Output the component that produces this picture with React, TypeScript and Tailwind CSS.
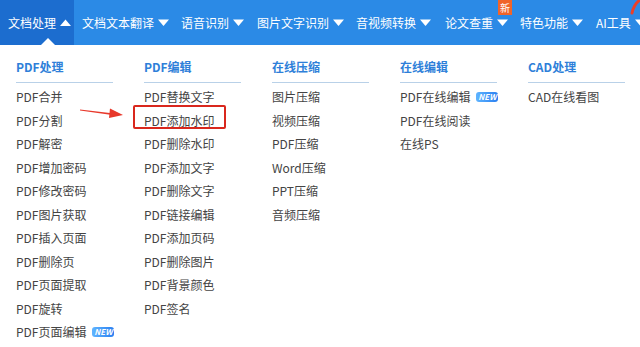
import React from "react";

const font = { fontFamily: '"Noto Sans CJK SC", "Noto Sans", sans-serif' };

const navItems = [
  { label: "文档处理", w: "w-[74px]", active: true },
  { label: "文档文本翻译", w: "w-[99px]" },
  { label: "语音识别", w: "w-[76px]" },
  { label: "图片文字识别", w: "w-[99px]" },
  { label: "音视频转换", w: "w-[89px]" },
  { label: "论文查重", w: "w-[75px]", badge: true },
  { label: "特色功能", w: "w-[76px]" },
  { label: "AI工具", w: "w-[60px]" },
];

type Item = { text: string; isNew?: boolean; boxed?: boolean };

const columns: { title: string; items: Item[] }[] = [
  {
    title: "PDF处理",
    items: [
      { text: "PDF合并" },
      { text: "PDF分割" },
      { text: "PDF解密" },
      { text: "PDF增加密码" },
      { text: "PDF修改密码" },
      { text: "PDF图片获取" },
      { text: "PDF插入页面" },
      { text: "PDF删除页" },
      { text: "PDF页面提取" },
      { text: "PDF旋转" },
      { text: "PDF页面编辑", isNew: true },
    ],
  },
  {
    title: "PDF编辑",
    items: [
      { text: "PDF替换文字" },
      { text: "PDF添加水印", boxed: true },
      { text: "PDF删除水印" },
      { text: "PDF添加文字" },
      { text: "PDF删除文字" },
      { text: "PDF链接编辑" },
      { text: "PDF添加页码" },
      { text: "PDF删除图片" },
      { text: "PDF背景颜色" },
      { text: "PDF签名" },
    ],
  },
  {
    title: "在线压缩",
    items: [
      { text: "图片压缩" },
      { text: "视频压缩" },
      { text: "PDF压缩" },
      { text: "Word压缩" },
      { text: "PPT压缩" },
      { text: "音频压缩" },
    ],
  },
  {
    title: "在线编辑",
    items: [
      { text: "PDF在线编辑", isNew: true },
      { text: "PDF在线阅读" },
      { text: "在线PS" },
    ],
  },
  {
    title: "CAD处理",
    items: [{ text: "CAD在线看图" }],
  },
];

function Caret({ up }: { up?: boolean }) {
  return (
    <svg width="11" height="7" viewBox="0 0 11 7" className="ml-[4px]">
      {up ? (
        <path d="M0 7 L5.5 0.5 L11 7 Z" fill="#fff" />
      ) : (
        <path d="M0 0.5 L11 0.5 L5.5 7 Z" fill="#fff" />
      )}
    </svg>
  );
}

function NewTag() {
  return (
    <span className="ml-[6px] inline-flex h-[10px] w-[22px] items-center justify-center rounded-[3px] bg-gradient-to-r from-[#5fb4ff] to-[#2a7ff0] text-[8px] font-bold italic leading-none text-white">
      NEW
    </span>
  );
}

export default function App() {
  return (
    <div className="w-[640px] h-[347px] overflow-hidden bg-white" style={font}>
      <nav className="relative flex h-[45px] bg-[#2b8ae6] text-[12px] text-white">
        {navItems.map((n) => (
          <div
            key={n.label}
            className={`relative flex shrink-0 items-center pl-[8px] ${n.w} ${n.active ? "bg-[#1c6dcf]" : ""}`}
          >
            <span>{n.label}</span>
            <Caret up={n.active} />
            {n.active && (
              <svg width="14" height="7" viewBox="0 0 14 7" className="absolute bottom-0 left-[41px]">
                <path d="M0 7 L7 0 L14 7 Z" fill="#fff" />
              </svg>
            )}
            {n.badge && (
              <span className="absolute left-[61px] top-0 flex h-[15px] w-[14px] items-center justify-center bg-[#f0642a] text-[10px] leading-none">
                新
              </span>
            )}
          </div>
        ))}
        <svg width="10" height="16" viewBox="0 0 10 16" className="absolute right-0 top-0">
          <path d="M10 0 Q4 4 2 13" stroke="#e8402a" strokeWidth="3" fill="none" strokeLinecap="round" />
        </svg>
      </nav>

      <div className="relative flex pl-[16px] pt-[12px]">
        {columns.map((c) => (
          <div key={c.title} className="w-[128px] shrink-0">
            <div className="w-[97px] border-b border-[#b9d1e8] pb-[5px] text-[12px] font-bold leading-[20px] text-[#2e7fd9]">
              {c.title}
            </div>
            <ul className="mt-[2px]">
              {c.items.map((it) => (
                <li
                  key={it.text}
                  className="relative flex items-center text-[12px] leading-[23.5px] text-[#444]"
                >
                  {it.text}
                  {it.isNew && <NewTag />}
                  {it.boxed && (
                    <span className="absolute -left-[11px] top-[-4px] h-[24px] w-[93px] rounded-[2px] border-2 border-[#d9271d]" />
                  )}
                </li>
              ))}
            </ul>
          </div>
        ))}
        <svg width="46" height="12" viewBox="0 0 46 12" className="absolute left-[79px] top-[62px]">
          <path d="M1 2.5 L33 6.2 L33 8 L1 3.5 Z" fill="#e8382b" />
          <path d="M31 1.5 L44 8 L30 11 Z" fill="#e8382b" />
        </svg>
      </div>
    </div>
  );
}
